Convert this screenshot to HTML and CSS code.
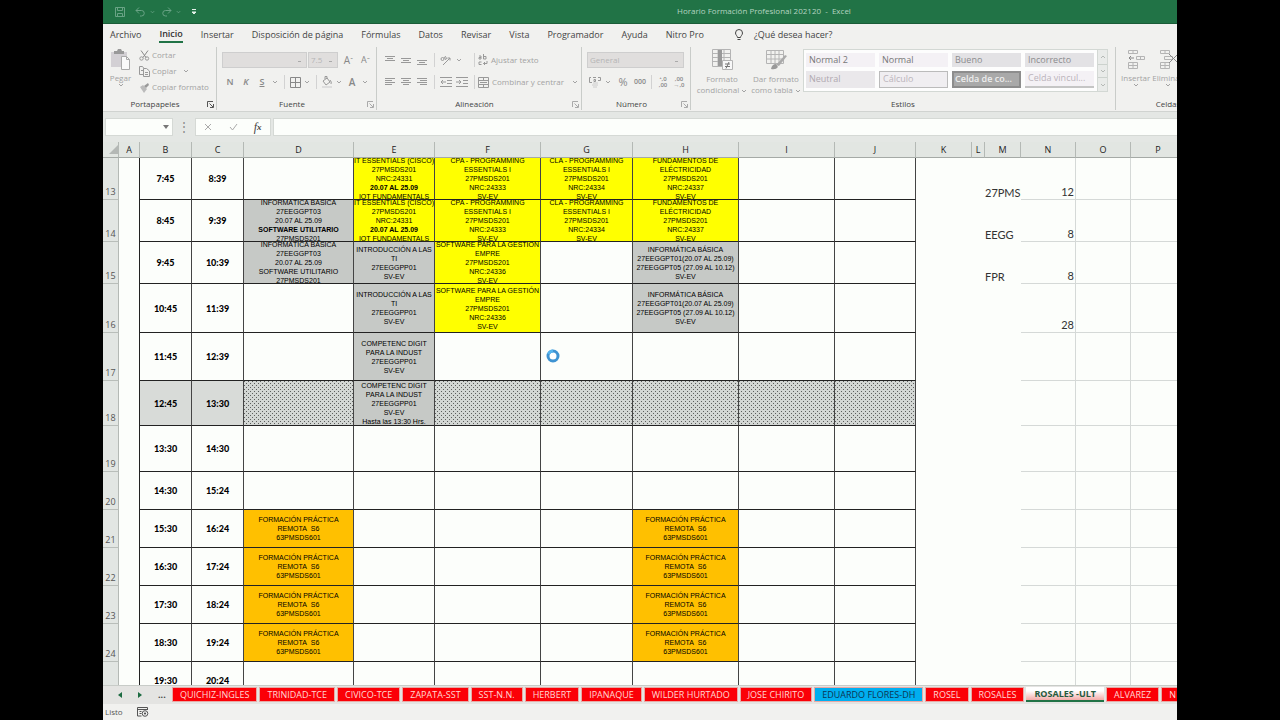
FILE: index.html
```html
<!DOCTYPE html>
<html lang="es">
<head>
<meta charset="utf-8">
<title>Horario Formación Profesional 202120 - Excel</title>
<link rel="stylesheet" href="styles.css">
</head>
<body>
<svg class="defs" aria-hidden="true">
  <symbol id="caret" viewBox="0 0 6 4"><path d="M1 1l2 2 2-2" fill="none" stroke="currentColor"/></symbol>
  <symbol id="launch" viewBox="0 0 7 7"><path d="M6 .5H.5V6M2.500 2.500L6 6M6.500 3v3.500H3" fill="none" stroke="currentColor"/></symbol>
</svg>
<div class="app">
  <header class="titlebar">
    <div class="quick">
      <button aria-label="Guardar"><svg width="10" height="10" viewBox="0 0 10 10"><path d="M.5.5h9v9h-9zM2.500.5v3h5v-3M2.500 9.500v-3h5v3" /></svg></button>
      <button aria-label="Deshacer"><svg width="11" height="10" viewBox="0 0 11 10"><path d="M4 .5l-3 3 3 3M1 3.500h5.500a2.500 2.500 0 0 1 0 5.500H5"/></svg></button>
      <svg class="car" width="5" height="4"><use href="#caret"/></svg>
      <button class="redo" aria-label="Rehacer"><svg width="11" height="10" viewBox="0 0 11 10"><path d="M7 .5l3 3-3 3M10 3.500H4.500a2.500 2.500 0 0 0 0 5.500H6"/></svg></button>
      <svg class="car" width="5" height="4"><use href="#caret"/></svg>
      <button class="more" aria-label="Personalizar"><svg width="6" height="6" viewBox="0 0 6 6"><path d="M1 .5h4"/><path d="M1 3h4L3 5z" fill="currentColor"/></svg></button>
    </div>
    <div class="title">Horario Formación Profesional 202120 &nbsp;-&nbsp; Excel</div>
  </header>
  <nav class="tabs">
    <button>Archivo</button><button class="on">Inicio</button><button>Insertar</button><button>Disposición de página</button><button>Fórmulas</button><button>Datos</button><button>Revisar</button><button>Vista</button><button>Programador</button><button>Ayuda</button><button>Nitro Pro</button>
    <button class="tell"><svg width="10" height="12" viewBox="0 0 10 12"><path d="M3.500 8.500C3.500 7 1.500 6 1.500 4a3.500 3.500 0 0 1 7 0c0 2-2 3-2 4.500zM3.500 10.500h3" fill="none" stroke="currentColor"/></svg>¿Qué desea hacer?</button>
  </nav>
  <section class="ribbon">
    <div class="group clip">
      <div class="body">
        <button class="big paste"><svg width="21" height="21" viewBox="0 0 21 21"><path d="M1 3h16v15H1z" fill="#d3d0d4"/><path d="M4 2h3l1-2h3l1 2h2v3H4z" fill="#999"/><path d="M11.500 7.500h5l3 3v10h-8z" fill="#fafafa" stroke="#aaa"/><path d="M16.500 7.500v3h3" fill="none" stroke="#aaa"/></svg><span>Pegar</span><svg width="6" height="4"><use href="#caret"/></svg></button>
        <div class="stack">
          <button><svg width="11" height="11" viewBox="0 0 11 11"><path d="M2 .5l5 7M9 .5l-5 7" stroke="#888" fill="none"/><circle cx="2.500" cy="8.500" r="1.700" fill="none" stroke="#999"/><circle cx="8" cy="8.500" r="1.700" fill="none" stroke="#999"/></svg>Cortar</button>
          <button><svg width="11" height="11" viewBox="0 0 11 11"><path d="M5 8.500H.5v-8h3l1.500 2M4.500 2.500h3l3 2.500v5.500h-6zM6 6.500h3M6 8.500h3M2 4.500h2" fill="none" stroke="#999"/></svg>Copiar <svg class="gap" width="6" height="4"><use href="#caret"/></svg></button>
          <button><svg width="11" height="11" viewBox="0 0 11 11"><path d="M1 5l3-2 4 4-3 4z" fill="#bbb"/><path d="M5 4l4-3 1 2-3 3" fill="#999"/></svg>Copiar formato</button>
        </div>
      </div>
      <footer><span>Portapapeles</span><svg class="dark" width="7" height="7"><use href="#launch"/></svg></footer>
    </div>
    <div class="group font">
      <div class="body rows">
        <div class="row"><select class="w85" aria-label="Fuente" disabled><option></option></select><select class="w30" aria-label="Tamaño" disabled><option>7.5</option></select><button class="grow">A<sup>ˆ</sup></button><button class="grow small">A<sup>ˇ</sup></button></div>
        <div class="row"><button class="b">N</button><button class="b i">K</button><button class="b u">S</button><button class="c" aria-label="Subrayado"><svg width="6" height="4"><use href="#caret"/></svg></button><i class="sep"></i><button class="m" aria-label="Bordes"><svg width="11" height="11" viewBox="0 0 11 11"><path d="M.5.500h10v10H.5zM5.500 1v9M1 5.500h9" fill="none" stroke="#888"/></svg></button><button class="c" aria-label="Más bordes"><svg width="6" height="4"><use href="#caret"/></svg></button><i class="sep"></i><button class="m" aria-label="Relleno"><svg width="12" height="12" viewBox="0 0 12 12"><path d="M2 5l4-3 3 4-4 3zM4 3V.5h2V3" fill="none" stroke="#999"/><path d="M9 4q2 2 1 4" fill="none" stroke="#999"/><path d="M1 10h10v2H1z" fill="#ddd" stroke="none"/></svg></button><button class="c" aria-label="Más rellenos"><svg width="6" height="4"><use href="#caret"/></svg></button><button class="b a">A</button><button class="c" aria-label="Color de fuente"><svg width="6" height="4"><use href="#caret"/></svg></button></div>
      </div>
      <footer><span>Fuente</span><svg width="7" height="7"><use href="#launch"/></svg></footer>
    </div>
    <div class="group align">
      <div class="body rows">
        <div class="row"><button class="n" aria-label="Superior"><svg width="10" height="10" viewBox="0 0 10 10"><path d="M0 1.500h10M2 3.500h6M0 5.500h10"/></svg></button><button class="n" aria-label="Medio"><svg width="10" height="10" viewBox="0 0 10 10"><path d="M0 3.500h10M2 5.500h6M0 7.500h10"/></svg></button><button class="n" aria-label="Inferior"><svg width="10" height="10" viewBox="0 0 10 10"><path d="M0 5.500h10M2 7.500h6M0 9.500h10"/></svg></button><i class="sep"></i><button class="n" aria-label="Orientación"><svg width="12" height="11" viewBox="0 0 12 11"><path d="M3 10l7-7M7.500 3H10v2.500"/><circle cx="2.500" cy="4" r="1.500"/><path d="M4 2l2 3M5 1l2 3"/></svg></button><button class="c" aria-label="Más orientación"><svg width="6" height="4"><use href="#caret"/></svg></button><i class="sep end"></i><button class="txt"><svg width="10" height="12" viewBox="0 0 10 12"><path d="M1 2h2v3H1V3.500h2M5.500 0v5h2.500V2.500H5.500M3.500 8H1v2.500h2.500M9 7v2.500H5.500M7 8L5.500 9.500 7 11"/></svg>Ajustar texto</button></div>
        <div class="row"><button class="n" aria-label="Izquierda"><svg width="10" height="10" viewBox="0 0 10 10"><path d="M0 1.500h10M0 3.500h7M0 5.500h10M0 7.500h7"/></svg></button><button class="n" aria-label="Centro"><svg width="10" height="10" viewBox="0 0 10 10"><path d="M0 1.500h10M2 3.500h6M0 5.500h10M2 7.500h6"/></svg></button><button class="n" aria-label="Derecha"><svg width="10" height="10" viewBox="0 0 10 10"><path d="M0 1.500h10M3 3.500h7M0 5.500h10M3 7.500h7"/></svg></button><i class="sep"></i><button class="n" aria-label="Disminuir sangría"><svg width="12" height="10" viewBox="0 0 12 10"><path d="M0 .5h12M0 9.500h12M7 3.500h5M7 6.500h5M6 5H1M3 3L1 5l2 2"/></svg></button><button class="n" aria-label="Aumentar sangría"><svg width="12" height="10" viewBox="0 0 12 10"><path d="M0 .5h12M0 9.500h12M7 3.500h5M7 6.500h5M0 5h5M3 3l2 2-2 2"/></svg></button><i class="sep"></i><button class="txt"><svg width="11" height="11" viewBox="0 0 11 11"><path d="M.5.500h10v10H.5zM.5 3.500h10M.5 7.500h10M5.500.500v3M5.500 7.500v3M2 5.500h7"/></svg>Combinar y centrar <svg class="gap" width="6" height="4"><use href="#caret"/></svg></button></div>
      </div>
      <footer><span>Alineación</span><svg width="7" height="7"><use href="#launch"/></svg></footer>
    </div>
    <div class="group number">
      <div class="body rows">
        <div class="row"><select class="w97" aria-label="Formato de número" disabled><option>General</option></select></div>
        <div class="row"><button class="n" aria-label="Moneda"><svg width="12" height="11" viewBox="0 0 12 11"><path d="M2 .5H.5v5H3M9 .5h2.500v3H9M4 .500h3M5 2.500h1.500v2H5z"/><path d="M4 6h5M3 8h6M4 10h4" stroke="#ccc"/></svg></button><button class="c" aria-label="Más monedas"><svg width="6" height="4"><use href="#caret"/></svg></button><button class="pct">%</button><button class="zeros">000</button><i class="sep"></i><button class="dec">⁺,0<br>,00</button><button class="dec">,00<br>→,0</button></div>
      </div>
      <footer><span>Número</span><svg width="7" height="7"><use href="#launch"/></svg></footer>
    </div>
    <div class="group styles">
      <div class="body">
        <button class="big w54"><svg width="22" height="22" viewBox="0 0 22 22"><path d="M1.500.500h18v17h-18zM1.500 4.500h18M1.500 8.500h18M1.500 12.500h18M7 .5v17M13 .5v17"/><path d="M7 1h4v16H7z" fill="#999" stroke="none"/><path d="M11.500 11.500h10v9h-10z" fill="#f8f8f8"/><path d="M14 15h5M14 17.500h5M18 13l-3 6.500" stroke="#777"/></svg><span>Formato<br>condicional <svg width="6" height="4"><use href="#caret"/></svg></span></button>
        <button class="big w54"><svg width="22" height="22" viewBox="0 0 22 22"><path d="M1.500 1.500h17v13h-17zM1.500 5.500h17M1.500 10h17M6 1.500v13M10 1.500v13M14 1.500v13"/><path d="M20 6l2 1-8 10-3-1z" fill="#aaa" stroke="none"/><path d="M6 20q1-5 5-5l2 3q-2 3-7 2z" fill="#999" stroke="none"/></svg><span>Dar formato<br>como tabla <svg width="6" height="4"><use href="#caret"/></svg></span></button>
        <div class="gallery">
          <div class="cells">
            <button class="g1">Normal 2</button><button class="g1">Normal</button><button class="g2">Bueno</button><button class="g2 d">Incorrecto</button>
            <button class="g2 l">Neutral</button><button class="g3">Cálculo</button><button class="g4">Celda de co...</button><button class="g5">Celda vincul...</button>
          </div>
          <div class="scroll"><button aria-label="Arriba"><svg class="up" width="6" height="4"><use href="#caret"/></svg></button><button aria-label="Abajo"><svg width="6" height="4"><use href="#caret"/></svg></button><button aria-label="Más estilos"><svg width="6" height="4"><use href="#caret"/></svg></button></div>
        </div>
      </div>
      <footer><span>Estilos</span></footer>
    </div>
    <div class="group cellsgrp">
      <div class="body">
        <button class="big"><svg width="20" height="21" viewBox="0 0 20 21"><path d="M2.500 1.500h9v3h-9zM7 1.500v3M10.500 7.500h8v3h-8zM14.500 7.500v3M2.500 13.500h9v6h-9zM7 13.500v6M2.500 16.500h9"/><path d="M8 9H3M5 7L3 9l2 2" stroke="#888"/></svg><span>Insertar</span><svg width="6" height="4"><use href="#caret"/></svg></button>
        <button class="big"><svg width="20" height="21" viewBox="0 0 20 21"><path d="M2.500 1.500h9v3h-9zM7 1.500v3M6.500 7.500h8v3h-8zM2.500 13.500h9v6h-9zM7 13.500v6M2.500 16.500h9"/><path d="M11 5l9 9M20 5l-9 9" stroke="#888"/></svg><span>Eliminar</span><svg width="6" height="4"><use href="#caret"/></svg></button>
      </div>
      <footer><span>Celdas</span></footer>
    </div>
  </section>
  <section class="formula">
    <div class="name"><input aria-label="Cuadro de nombres"><svg width="6" height="4" viewBox="0 0 6 4"><path d="M0 0h6L3 4z" fill="#777"/></svg></div>
    <span class="dots">⋮</span>
    <div class="fx"><button aria-label="Cancelar"><svg width="8" height="8" viewBox="0 0 8 8"><path d="M1 1l6 6M7 1L1 7"/></svg></button><button aria-label="Introducir"><svg width="9" height="8" viewBox="0 0 9 8"><path d="M1 4l2.500 3L8 1"/></svg></button><button class="f">f<small>x</small></button></div>
    <input class="bar" aria-label="Barra de fórmulas">
  </section>
  <main class="sheet">
    <table>
      <colgroup><col class="c0"><col class="cA"><col class="cB"><col class="cB"><col class="cD"><col class="cE"><col class="cF"><col class="cG"><col class="cF"><col class="cI"><col class="cE"><col class="cK"><col class="cL"><col class="cM"><col class="cN"><col class="cN"><col class="cN"></colgroup>
      <thead><tr><th class="corner"><svg width="9" height="9" viewBox="0 0 9 9"><path d="M9 0v9H0z" fill="#b4b8b5"/></svg></th><th>A</th><th>B</th><th>C</th><th>D</th><th>E</th><th>F</th><th>G</th><th>H</th><th>I</th><th>J</th><th>K</th><th>L</th><th>M</th><th>N</th><th>O</th><th>P</th></tr></thead>
      <tbody>
        <tr class="h42"><th>13</th><td></td><td>7:45</td><td>8:39</td><td></td><td class="y"><div><span>IT ESSENTIALS (CISCO)<br>27PMSDS201<br>NRC:24331<br><b>20.07 AL 25.09</b><br>IOT FUNDAMENTALS</span></div></td><td class="y"><div>CPA - PROGRAMMING<br>ESSENTIALS I<br>27PMSDS201<br>NRC:24333<br>SV-EV</div></td><td class="y"><div>CLA - PROGRAMMING<br>ESSENTIALS I<br>27PMSDS201<br>NRC:24334<br>SV-EV</div></td><td class="y"><div>FUNDAMENTOS DE<br>ELÉCTRICIDAD<br>27PMSDS201<br>NRC:24337<br>SV-EV</div></td><td></td><td></td><td></td><td></td><td>27PMSDS</td><td>12</td><td></td><td></td></tr>
        <tr class="h42"><th>14</th><td></td><td>8:45</td><td>9:39</td><td class="g"><div><span>INFORMÁTICA BÁSICA<br>27EEGGPT03<br>20.07 AL 25.09<br><b>SOFTWARE UTILITARIO</b><br>27PMSDS201</span></div></td><td class="y"><div><span>IT ESSENTIALS (CISCO)<br>27PMSDS201<br>NRC:24331<br><b>20.07 AL 25.09</b><br>IOT FUNDAMENTALS</span></div></td><td class="y"><div>CPA - PROGRAMMING<br>ESSENTIALS I<br>27PMSDS201<br>NRC:24333<br>SV-EV</div></td><td class="y"><div>CLA - PROGRAMMING<br>ESSENTIALS I<br>27PMSDS201<br>NRC:24334<br>SV-EV</div></td><td class="y"><div>FUNDAMENTOS DE<br>ELÉCTRICIDAD<br>27PMSDS201<br>NRC:24337<br>SV-EV</div></td><td></td><td></td><td></td><td></td><td>EEGG</td><td>8</td><td></td><td></td></tr>
        <tr class="h42"><th>15</th><td></td><td>9:45</td><td>10:39</td><td class="g"><div>INFORMÁTICA BÁSICA<br>27EEGGPT03<br>20.07 AL 25.09<br>SOFTWARE UTILITARIO<br>27PMSDS201</div></td><td class="g"><div>INTRODUCCIÓN A LAS<br>TI<br>27EEGGPP01<br>SV-EV</div></td><td class="y"><div>SOFTWARE PARA LA GESTIÓN<br>EMPRE<br>27PMSDS201<br>NRC:24336<br>SV-EV</div></td><td></td><td class="g"><div>INFORMÁTICA BÁSICA<br>27EEGGPT01(20.07 AL 25.09)<br>27EEGGPT05 (27.09 AL 10.12)<br>SV-EV</div></td><td></td><td></td><td></td><td></td><td>FPR</td><td>8</td><td></td><td></td></tr>
        <tr class="h49"><th>16</th><td></td><td>10:45</td><td>11:39</td><td></td><td class="g"><div>INTRODUCCIÓN A LAS<br>TI<br>27EEGGPP01<br>SV-EV</div></td><td class="y"><div>SOFTWARE PARA LA GESTIÓN<br>EMPRE<br>27PMSDS201<br>NRC:24336<br>SV-EV</div></td><td></td><td class="g"><div>INFORMÁTICA BÁSICA<br>27EEGGPT01(20.07 AL 25.09)<br>27EEGGPT05 (27.09 AL 10.12)<br>SV-EV</div></td><td></td><td></td><td></td><td></td><td></td><td>28</td><td></td><td></td></tr>
        <tr class="h48"><th>17</th><td></td><td>11:45</td><td>12:39</td><td></td><td class="g"><div>COMPETENC DIGIT<br>PARA LA INDUST<br>27EEGGPP01<br>SV-EV</div></td><td></td><td></td><td></td><td></td><td></td><td></td><td></td><td></td><td></td><td></td><td></td></tr>
        <tr class="h45"><th>18</th><td></td><td class="lg">12:45</td><td class="lg">13:30</td><td class="dot"></td><td class="g"><div>COMPETENC DIGIT<br>PARA LA INDUST<br>27EEGGPP01<br>SV-EV<br>Hasta las 13:30 Hrs.</div></td><td class="dot"></td><td class="dot"></td><td class="dot"></td><td class="dot"></td><td class="dot"></td><td></td><td></td><td></td><td></td><td></td><td></td></tr>
        <tr class="h46"><th>19</th><td></td><td>13:30</td><td>14:30</td><td></td><td></td><td></td><td></td><td></td><td></td><td></td><td></td><td></td><td></td><td></td><td></td><td></td></tr>
        <tr class="h38"><th>20</th><td></td><td>14:30</td><td>15:24</td><td></td><td></td><td></td><td></td><td></td><td></td><td></td><td></td><td></td><td></td><td></td><td></td><td></td></tr>
        <tr class="h38"><th>21</th><td></td><td>15:30</td><td>16:24</td><td class="o"><div>FORMACIÓN PRÁCTICA<br>REMOTA&nbsp; S6<br>63PMSDS601</div></td><td></td><td></td><td></td><td class="o"><div>FORMACIÓN PRÁCTICA<br>REMOTA&nbsp; S6<br>63PMSDS601</div></td><td></td><td></td><td></td><td></td><td></td><td></td><td></td><td></td></tr>
        <tr class="h38"><th>22</th><td></td><td>16:30</td><td>17:24</td><td class="o"><div>FORMACIÓN PRÁCTICA<br>REMOTA&nbsp; S6<br>63PMSDS601</div></td><td></td><td></td><td></td><td class="o"><div>FORMACIÓN PRÁCTICA<br>REMOTA&nbsp; S6<br>63PMSDS601</div></td><td></td><td></td><td></td><td></td><td></td><td></td><td></td><td></td></tr>
        <tr class="h38"><th>23</th><td></td><td>17:30</td><td>18:24</td><td class="o"><div>FORMACIÓN PRÁCTICA<br>REMOTA&nbsp; S6<br>63PMSDS601</div></td><td></td><td></td><td></td><td class="o"><div>FORMACIÓN PRÁCTICA<br>REMOTA&nbsp; S6<br>63PMSDS601</div></td><td></td><td></td><td></td><td></td><td></td><td></td><td></td><td></td></tr>
        <tr class="h38"><th>24</th><td></td><td>18:30</td><td>19:24</td><td class="o"><div>FORMACIÓN PRÁCTICA<br>REMOTA&nbsp; S6<br>63PMSDS601</div></td><td></td><td></td><td></td><td class="o"><div>FORMACIÓN PRÁCTICA<br>REMOTA&nbsp; S6<br>63PMSDS601</div></td><td></td><td></td><td></td><td></td><td></td><td></td><td></td><td></td></tr>
        <tr class="h38"><th></th><td></td><td>19:30</td><td>20:24</td><td></td><td></td><td></td><td></td><td></td><td></td><td></td><td></td><td></td><td></td><td></td><td></td><td></td></tr>
      </tbody>
    </table>
    <svg class="busy" width="16" height="16" viewBox="0 0 16 16"><circle cx="8" cy="8" r="5" fill="#fff" stroke="#3f93d2" stroke-width="3"/><path d="M3.500 6A5 5 0 0 1 8 3" fill="none" stroke="#55b4ee" stroke-width="3"/></svg>
  </main>
  <nav class="sheets">
    <div class="nav"><button aria-label="Anterior"><svg width="4" height="6" viewBox="0 0 4 6"><path d="M4 0v6L0 3z" fill="#1c6b41"/></svg></button><button aria-label="Siguiente"><svg width="4" height="6" viewBox="0 0 4 6"><path d="M0 0v6l4-3z" fill="#1c6b41"/></svg></button><button class="el">...</button></div>
    <button>QUICHIZ-INGLES</button><button>TRINIDAD-TCE</button><button>CIVICO-TCE</button><button>ZAPATA-SST</button><button>SST-N.N.</button><button>HERBERT</button><button>IPANAQUE</button><button>WILDER HURTADO</button><button>JOSE CHIRITO</button><button class="blue">EDUARDO FLORES-DH</button><button>ROSEL</button><button>ROSALES</button><button class="cur">ROSALES -ULT</button><button>ALVAREZ</button><button>N</button>
  </nav>
  <footer class="status"><span>Listo</span><svg width="12" height="10" viewBox="0 0 12 10"><path d="M.5 9V.500h10V3M.5 2.500h10M2.500 4.500h2M2.500 6.500h2M.5 9h4" fill="none" stroke="#555"/><circle cx="8" cy="6.500" r="2.800" fill="#eee" stroke="#555"/><circle cx="8" cy="6.500" r="1" fill="#444"/></svg></footer>
</div>
</body>
</html>
```
FILE: styles.css
```css
* { box-sizing: border-box; }
body { margin: 0; background: #000; font: 9px/12px "Open Sans", "Noto Sans", sans-serif; color: #444; }
button, input, select { font: inherit; color: inherit; background: none; border: 0; padding: 0; margin: 0; border-radius: 0; }
button { display: flex; align-items: center; justify-content: center; white-space: nowrap; flex: none; }
svg { flex: none; }
.defs { display: none; }
.app { height: 100vh; margin: 0 103px; display: flex; flex-direction: column; overflow: hidden; background: #f1f1ef; }

.titlebar { height: 24px; flex: none; background: #217346; border-bottom: 1px solid #1a5c38; display: grid; grid-template-columns: 1fr auto 1fr; align-items: center; }
.quick { display: flex; align-items: center; gap: 4px; padding: 1px 0 0 12px; color: #69a385; }
.quick button:first-child { margin-right: 6px; }
.quick .redo { margin-left: 2px; }
.quick .more { margin-left: 6px; color: #e4f0e9; }
.quick svg { fill: none; stroke: currentColor; }
.title { color: #b5d3c1; font-size: 8px; grid-column: 2; margin-left: 248px; padding-bottom: 2px; }

.tabs { height: 22px; flex: none; display: flex; gap: 18px; padding-left: 7px; }
.tabs button { height: 21px; }
.tabs .on { font-weight: 600; border-bottom: 2px solid #217346; padding-top: 2px; height: 19px; color: #333; }
.tabs .tell { gap: 10px; margin-left: 12px; }

.ribbon { height: 66px; flex: none; display: flex; color: #a3a3a3; border-bottom: 1px solid #d0d3d0; overflow: hidden; font-size: 8px; }
.group { flex: none; display: flex; flex-direction: column; justify-content: space-between; border-right: 1px solid #c9ccc9; margin: 1px 0; }
.clip { width: 114px; }
.font { width: 160px; }
.align { width: 205px; }
.number { width: 109px; }
.styles { width: 425px; }
.cellsgrp { width: 104px; border: 0; }
.body { display: flex; }
.group footer { color: #444; display: flex; justify-content: center; height: 12px; align-items: center; }
.group footer span { flex: 1; text-align: center; }
.group footer svg { color: #aaa; margin-right: 2px; }
.group footer .dark { color: #555; }
.stack { display: flex; flex-direction: column; gap: 4px; padding-top: 2px; margin-left: 1px; }
.stack button { gap: 2px; justify-content: flex-start; height: 12px; }
.gap { margin-left: 5px; }
.big { flex-direction: column; justify-content: flex-start; line-height: 11px; padding-top: 2px; }
.big > svg { margin-bottom: 2px; fill: none; stroke: #b4b4b4; }
.paste { width: 35px; }
.paste > svg { stroke: none; }
.w54 { width: 54px; }
.styles .body { padding-left: 4px; }
.cellsgrp .body { padding-left: 5px; gap: 2px; }

.rows { flex-direction: column; gap: 6px; padding: 5px 0 0 5px; }
.row { display: flex; align-items: center; height: 16px; }
.row svg { stroke: #999; fill: none; }
.row svg use { stroke: none; }
select { appearance: none; height: 16px; background: #e0dedd linear-gradient(#aaa, #aaa) calc(100% - 5px) 8px / 3px 1px no-repeat; border: 1px solid #cecece; color: #b5b5b5; padding-left: 2px; opacity: 1; }
.w85 { width: 85px; margin-right: 1px; }
.w30 { width: 30px; margin-right: 2px; }
.w97 { width: 97px; }
.grow { width: 17px; font-size: 10px; color: #888; }
.grow sup { font-size: 8px; line-height: 8px; }
.small { font-size: 9px; }
.b { width: 16px; font-size: 9px; font-weight: 600; color: #888; }
.a { font-size: 10px; }
.i { font-style: italic; }
.u { text-decoration: underline; }
.c { width: 10px; }
.m { width: 14px; }
.n { width: 16px; }
.sep { width: 8px; height: 14px; background: linear-gradient(#d2d2d2, #d2d2d2) 50% 0 / 1px 100% no-repeat; }
.end { margin-left: 6px; }
.txt { gap: 3px; }
.pct { width: 20px; font-size: 11px; color: #888; }
.zeros { width: 14px; font-size: 7px; font-weight: 600; color: #888; }
.dec { width: 16px; font-size: 6px; line-height: 6px; font-weight: 600; color: #888; }

.gallery { display: flex; background: #fdfdfd; border: 1px solid #d3d8d4; height: 43px; flex: 1; margin: 2px 7px 0 0; font-size: 9px; }
.cells { display: grid; grid-template-columns: repeat(4, 1fr); gap: 4px; padding: 3px 3px 3px 2px; flex: 1; }
.cells button { justify-content: flex-start; padding-left: 3px; overflow: hidden; color: #777; min-width: 0; }
.g1 { background: #f4f1f5; }
.g2 { background: #e3e2e5; }
.cells .g2 { color: #8b8b8e; }
.cells .l { color: #b0a9b0; background: #eae8eb; }
.cells .g3 { background: #f0eef1; border: 1px solid #bbb; color: #bbb4bb; }
.cells .g4 { background: #a9a9a9; border: 2px solid #8d8d8d; color: #eee; font-weight: 600; padding-left: 1px; }
.cells .g5 { background: #f4f1f5; border-bottom: 2px solid #c5c5c5; color: #bbb4bb; }
.scroll { width: 10px; border-left: 1px solid #d3d8d4; display: grid; grid-template-rows: repeat(3, 1fr); background: #e9ebe9; color: #b5b9b6; }
.scroll button + button { border-top: 1px solid #ccd2cd; }
.up { transform: rotate(180deg); }

.formula { flex: none; height: 30px; display: flex; align-items: center; background: #e4e7e4; padding: 1px 0 1px 2px; }
.name { width: 68px; height: 18px; display: flex; align-items: center; background: #fcfefb; border: 1px solid #d5d9d5; padding-right: 3px; }
.name input { flex: 1; min-width: 0; }
.dots { width: 22px; text-align: center; font-size: 12px; color: #888; }
.fx { width: 76px; height: 18px; display: flex; background: #fcfefb; border: 1px solid #d5d9d5; align-items: center; }
.fx button { flex: 1; }
.fx svg { fill: none; stroke: #aaa; }
.f { font: italic 12px "Liberation Serif", serif; color: #444; }
.f small { font-size: 9px; font-weight: bold; }
.bar { flex: 1; height: 18px; margin-left: 2px; background: #fcfefb; border: 1px solid #d5d9d5; border-right: 0; }

.sheet { flex: 1; min-height: 0; overflow: hidden; position: relative; background: #fcfefb; }
table { border-collapse: separate; border-spacing: 0; table-layout: fixed; width: 1083px; }
.c0 { width: 16px; } .cA { width: 21px; } .cB { width: 52px; } .cD { width: 110px; } .cE { width: 81px; }
.cF { width: 106px; } .cG { width: 92px; } .cI { width: 96px; } .cK { width: 56px; } .cL { width: 13px; }
.cM { width: 36px; } .cN { width: 55px; }
th, td { padding: 0; overflow: hidden; text-align: center; white-space: nowrap; }
thead th { height: 16px; background: #e2e6e2; border-right: 1px solid #b4b9b5; border-bottom: 1px solid #a5aaa6; font-weight: 400; color: #222; line-height: 13px; }
.corner { text-align: right; line-height: 9px; }
tbody th { background: #e2e6e3; border-right: 1px solid #b4b9b5; border-bottom: 1px solid #b9beba; font-weight: 400; color: #555; vertical-align: bottom; line-height: 14px; }
td { font: 11px/15px Lato, sans-serif; color: #333; }
td:nth-child(2) { border-right: 1px solid #222; }
td:nth-child(n+3):nth-child(-n+11) { border-right: 1px solid #444; border-bottom: 1px solid #222; }
td:nth-child(3), td:nth-child(4) { font-size: 9px; font-weight: 900; color: #000; }
td:nth-child(14) { text-align: left; vertical-align: bottom; text-overflow: clip; }
td:nth-child(15) { text-align: right; vertical-align: bottom; padding-right: 1px; }
td:nth-child(n+15) { border-right: 1px solid #d5d9d7; border-bottom: 1px solid #d5d9d7; }
td div { font: 7px/9px "Liberation Sans", sans-serif; color: #000; display: grid; place-content: center; overflow: hidden; }
.h42 { height: 42px; } .h42 div { height: 41px; }
.h49 { height: 49px; } .h49 div { height: 48px; }
.h48 { height: 48px; } .h48 div { height: 47px; }
.h46 { height: 46px; }
.h45 { height: 45px; } .h45 div { height: 44px; }
.h38 { height: 38px; } .h38 div { height: 37px; }
.y { background: #ff0; }
.g { background: #c6c9c6; }
.o { background: #ffc000; }
.lg { background: #d8dbd8; }
.dot { background: conic-gradient(at 1px 1px, transparent 75%, #5c5f5d 0) 0 0 / 4px 4px, conic-gradient(at 1px 1px, transparent 75%, #5c5f5d 0) 2px 2px / 4px 4px, #d3d7d4; }
.busy { position: absolute; left: 442px; top: 206px; }

.sheets { flex: none; height: 19px; display: flex; gap: 2px; padding: 1px 0 2px; background: #e4e4e2; border-top: 1px solid #c8ccc8; overflow: hidden; }
.sheets > button { background: #fb0007; color: #ffd9d4; padding: 0 7px; border: 1px solid #e8a9a5; }
.sheets .blue { background: #00aeef; color: #0d3552; }
.sheets .cur { background: linear-gradient(#fff 30%, #f3a9a7); color: #245a3c; font-weight: 700; border: 0; border-bottom: 2px solid #217346; padding: 0 8px; }
.nav { width: 67px; flex: none; display: flex; align-items: center; gap: 16px; padding-left: 15px; }
.nav .el { font-weight: 700; }
.status { flex: none; height: 16px; display: flex; align-items: center; gap: 14px; padding-left: 2px; font-size: 8px; color: #555; }
```
